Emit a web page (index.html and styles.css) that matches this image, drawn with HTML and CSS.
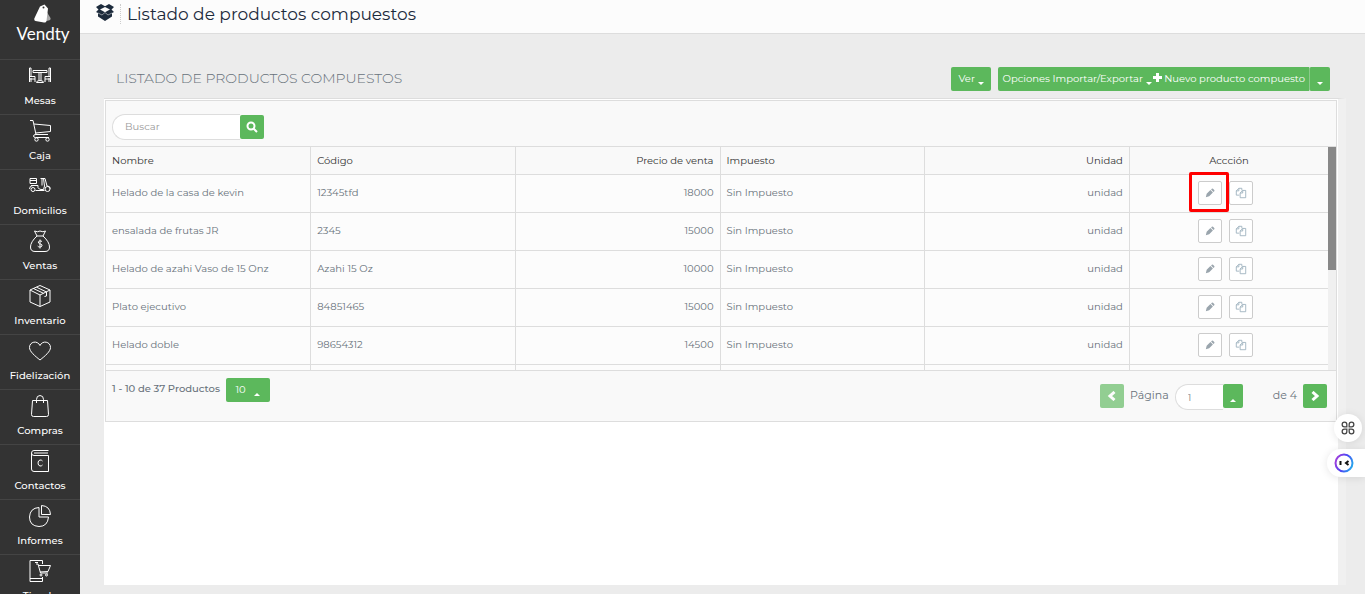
FILE: index.html
```html
<!DOCTYPE html>
<html lang="es">
<head>
  <meta charset="UTF-8">
  <meta name="viewport" content="width=device-width, initial-scale=1.0">
  <title>Vendty - Listado de productos compuestos</title>
  <link rel="stylesheet" href="styles.css">
</head>
<body>
  <svg class="sprite" aria-hidden="true">
    <symbol id="pencil" viewBox="0 0 12 12"><path d="M1 11l1-4L6.500 2.500l3 3L5 10zM7.300 1.800l.9-.9q.7-.6 1.400 0l1.500 1.500q.6.700 0 1.400l-.9.900z"/></symbol>
    <symbol id="copy" viewBox="0 0 14 14"><path d="M5 9.500H1.500V4.500l3-3H8V4M4.500 1.500v3h-3M6 12.500V7l3-3h3.500v8.500zM9 4v3H6" fill="none" stroke="currentColor"/></symbol>
  </svg>

  <div class="layout">
    <nav class="sidebar">
      <a href="#" class="logo">
        <svg width="20" height="20" viewBox="0 0 20 20">
          <path d="M12 5l5.500 9q.5 2-2 2.500l-4 1z" fill="#aaa"/>
          <path d="M7 2.500l4.500-2 3.500 4-1.500 12.500q-.5 2-2.500 1.500L2.500 17q-1.700-.5-1.200-2.500z" fill="#fff"/>
          <circle cx="10.500" cy="3.500" r="1" fill="#333"/>
        </svg>
        <span>Vendty</span>
      </a>
      <a href="#" class="menu-item">
        <svg width="24" height="24" viewBox="0 0 24 24"><path d="M1.500 4v14M3 4v8M1.500 12.500H7V18M3 14v4M1.500 15H7M22.500 4v14M21 4v8M22.500 12.500H17V18M21 14v4M22.500 15H17M1.500 4H3M21 4h1.500M5 6.500h14v2H5zM11 8.500v8M13 8.500v8M8.500 18.500q0-2 3.500-2t3.500 2z"/></svg>
        <span>Mesas</span>
      </a>
      <a href="#" class="menu-item">
        <svg width="24" height="24" viewBox="0 0 24 24"><path d="M2 1.500h3L8 15.500h12M6 5l16.500 1.500v6L7.500 14M8 15.500q-2.500 0-2.500 1.500t2 1.500h13.500"/><circle cx="8.500" cy="20.500" r="1.700"/><circle cx="19.500" cy="20.500" r="1.700"/></svg>
        <span>Caja</span>
      </a>
      <a href="#" class="menu-item">
        <svg width="24" height="24" viewBox="0 0 24 24"><path d="M2 4.500h6.500v5H2zM2 6.500h6.500M3 11.500h7v2q1 2 3 2h2.500l1-3.500-1-7.500M1.500 15q0-3.500 3.500-3.500M12.500 4.500h4.500l2 7.500q3 0 3.500 2.500M7.500 16.500h9M14 5v6.500"/><circle cx="5" cy="15.500" r="2"/><circle cx="19.500" cy="15" r="2.500"/></svg>
        <span>Domicilios</span>
      </a>
      <a href="#" class="menu-item">
        <svg width="24" height="24" viewBox="0 0 24 24"><path d="M9 7L6.500 2q3 1.500 5.500 0 3 1.500 5.500 0L15 7zM9 7q-6.500 6-6.500 11 0 4.500 4.500 4.500h10q4.500 0 4.500-4.500 0-5-6.500-11M14 12.500q-1-.8-2.500-.5-1.700.5-1 2 .5.800 2 1 2 .5 1.500 2-.5 1.200-2.300 1-1.200 0-2-.9M12 10.500v9"/></svg>
        <span>Ventas</span>
      </a>
      <a href="#" class="menu-item">
        <svg width="24" height="24" viewBox="0 0 24 24"><path d="M12 1.500l10 4.500v12l-10 4.500L2 18V6zM2 6l10 5 10-5M12 11v11.500M5.500 4.500l10 4.800M8.500 3.200L18.500 8v4l-2 .5"/></svg>
        <span>Inventario</span>
      </a>
      <a href="#" class="menu-item">
        <svg width="24" height="24" viewBox="0 0 24 24"><path d="M12 21C7 17 1.500 12.500 1.500 8.500 1.500 2.500 9.500 1 12 6.500 14.500 1 22.500 2.500 22.500 8.500 22.500 12.500 17 17 12 21z"/></svg>
        <span>Fidelización</span>
      </a>
      <a href="#" class="menu-item">
        <svg width="24" height="24" viewBox="0 0 24 24"><path d="M4.500 6.500h15l1 14q0 2-2 2h-13q-2 0-2-2zM8.500 9V5.500q0-4 3.500-4t3.500 4V9"/></svg>
        <span>Compras</span>
      </a>
      <a href="#" class="menu-item">
        <svg width="24" height="24" viewBox="0 0 24 24"><path d="M20.500 1.500H6Q3.500 1.500 3.500 4T6 6.500h14.500v16H6q-2.500 0-2.500-2.500V4M6 4h14M14.500 12q-1-1.200-2.500-1-2 .5-2 3t2 3q1.500.2 2.500-1"/></svg>
        <span>Contactos</span>
      </a>
      <a href="#" class="menu-item">
        <svg width="24" height="24" viewBox="0 0 24 24"><path d="M11 3.500V13h9.500q-.8 9.500-9.500 9.500-9.500-.5-9.500-9.500Q2 4 11 3.500zM13.500 1.500q8.500.5 9 9h-9z"/></svg>
        <span>Informes</span>
      </a>
      <a href="#" class="menu-item">
        <svg width="24" height="24" viewBox="0 0 24 24"><path d="M14.500 5V1.500H2v21h12.500V18M2 19.500h12.500M7 3.500h3M8 5h2l2.500 9h7.500M10.500 6.500h12l-2.500 6-8 .5"/><circle cx="13" cy="16" r="1"/><circle cx="18.500" cy="16" r="1"/></svg>
        <span>Tienda</span>
      </a>
    </nav>

    <main class="main">
      <header class="topbar">
        <svg width="18" height="17" viewBox="0 0 18 17"><path d="M5 0l4 2.200L13 0l5 3-2.500 2.500L18 8l-2 1v3.500L9 17l-7-4.500V9L0 8l2.500-2.500L0 3z" fill="#1d2b3c"/><path d="M4 5.500L9 3l5 2.500L9 8.300z" fill="#fcfcfc"/><path d="M2 9l4 2 3-2.500 3 2.500 4-2" fill="none" stroke="#8a929b"/></svg>
        <h1>Listado de productos compuestos</h1>
      </header>

      <section class="content">
        <div class="heading">
          <h2>LISTADO DE PRODUCTOS COMPUESTOS</h2>
          <div class="actions">
            <button class="btn btn-view">Ver <i class="caret"></i></button>
            <div class="btn-group">
              <button class="btn btn-options">Opciones Importar/Exportar <i class="caret"></i></button>
              <button class="btn btn-new"><svg width="9" height="9" viewBox="0 0 9 9"><path d="M3 0h3v3h3v3H6v3H3V6H0V3h3z" fill="#fff"/></svg> Nuevo producto compuesto</button>
              <button class="btn btn-more" aria-label="Más opciones"><i class="caret"></i></button>
            </div>
          </div>
        </div>

        <div class="panel">
          <div class="repeater">
            <form class="search">
              <input type="text" placeholder="Buscar" aria-label="Buscar">
              <button type="button" class="btn" aria-label="Buscar"><svg width="12" height="12" viewBox="0 0 12 12" fill="none" stroke="#fff" stroke-width="2"><circle cx="5" cy="5" r="3.500"/><path d="M7.500 7.500L11 11"/></svg></button>
            </form>

            <div class="viewport">
              <table>
                <thead>
                  <tr>
                    <th>Nombre</th>
                    <th>Código</th>
                    <th class="right">Precio de venta</th>
                    <th>Impuesto</th>
                    <th class="right">Unidad</th>
                    <th class="center">Accción</th>
                  </tr>
                </thead>
                <tbody>
                  <tr>
                    <td>Helado de la casa de kevin</td>
                    <td>12345tfd</td>
                    <td class="right">18000</td>
                    <td>Sin Impuesto</td>
                    <td class="right">unidad</td>
                    <td class="center"><div class="tools"><button class="tool marked" aria-label="Editar"><svg width="10" height="10"><use href="#pencil"/></svg></button><button class="tool" aria-label="Duplicar"><svg width="12" height="12"><use href="#copy"/></svg></button></div></td>
                  </tr>
                  <tr>
                    <td>ensalada de frutas JR</td>
                    <td>2345</td>
                    <td class="right">15000</td>
                    <td>Sin Impuesto</td>
                    <td class="right">unidad</td>
                    <td class="center"><div class="tools"><button class="tool" aria-label="Editar"><svg width="10" height="10"><use href="#pencil"/></svg></button><button class="tool" aria-label="Duplicar"><svg width="12" height="12"><use href="#copy"/></svg></button></div></td>
                  </tr>
                  <tr>
                    <td>Helado de azahi Vaso de 15 Onz</td>
                    <td>Azahi 15 Oz</td>
                    <td class="right">10000</td>
                    <td>Sin Impuesto</td>
                    <td class="right">unidad</td>
                    <td class="center"><div class="tools"><button class="tool" aria-label="Editar"><svg width="10" height="10"><use href="#pencil"/></svg></button><button class="tool" aria-label="Duplicar"><svg width="12" height="12"><use href="#copy"/></svg></button></div></td>
                  </tr>
                  <tr>
                    <td>Plato ejecutivo</td>
                    <td>84851465</td>
                    <td class="right">15000</td>
                    <td>Sin Impuesto</td>
                    <td class="right">unidad</td>
                    <td class="center"><div class="tools"><button class="tool" aria-label="Editar"><svg width="10" height="10"><use href="#pencil"/></svg></button><button class="tool" aria-label="Duplicar"><svg width="12" height="12"><use href="#copy"/></svg></button></div></td>
                  </tr>
                  <tr>
                    <td>Helado doble</td>
                    <td>98654312</td>
                    <td class="right">14500</td>
                    <td>Sin Impuesto</td>
                    <td class="right">unidad</td>
                    <td class="center"><div class="tools"><button class="tool" aria-label="Editar"><svg width="10" height="10"><use href="#pencil"/></svg></button><button class="tool" aria-label="Duplicar"><svg width="12" height="12"><use href="#copy"/></svg></button></div></td>
                  </tr>
                  <tr class="empty"><td></td><td></td><td></td><td></td><td></td><td></td></tr>
                </tbody>
              </table>
              <div class="scrollbar"><div class="thumb"></div></div>
            </div>

            <div class="footer">
              <div class="count">
                <span>1 - 10 de 37 Productos</span>
                <button class="btn btn-size">10 <i class="caret up"></i></button>
              </div>
              <div class="pager">
                <button class="btn btn-page" disabled aria-label="Anterior"><svg width="10" height="10" viewBox="0 0 10 10"><path d="M7.500 1L3 5l4.500 4"/></svg></button>
                <label for="page">Página</label>
                <div class="combo">
                  <input type="text" id="page" value="1">
                  <button class="btn" aria-label="Elegir página"><i class="caret up"></i></button>
                </div>
                <span class="total">de 4</span>
                <button class="btn btn-page" aria-label="Siguiente"><svg width="10" height="10" viewBox="0 0 10 10"><path d="M2.500 1L7 5 2.500 9"/></svg></button>
              </div>
            </div>
          </div>
        </div>
      </section>
    </main>
  </div>

  <button class="float-apps" aria-label="Aplicaciones"><svg width="14" height="14" viewBox="0 0 12 12" fill="none" stroke="#444" stroke-width="1.100"><path d="M5 5H3a2 2 0 1 1 2-2zM7 5V3a2 2 0 1 1 2 2zM5 7v2a2 2 0 1 1-2-2zM7 7h2a2 2 0 1 1-2 2z"/></svg></button>
  <button class="float-chat" aria-label="Asistente">
    <svg width="20" height="20" viewBox="0 0 20 20">
      <defs><linearGradient id="ring" x1="0" y1="0.300" x2="1" y2="0.700"><stop offset="0" stop-color="#a13fdc"/><stop offset="0.500" stop-color="#4a45f5"/><stop offset="1" stop-color="#27a8ec"/></linearGradient></defs>
      <circle cx="10" cy="10" r="8.500" fill="#fff" stroke="url(#ring)" stroke-width="2"/>
      <path d="M6.500 8v4M14.500 8L12 10l2.500 2" fill="none" stroke="#111" stroke-width="2"/>
    </svg>
  </button>
</body>
</html>
```
FILE: styles.css
```css
* {
  box-sizing: border-box;
}

body {
  margin: 0;
  font-family: Montserrat, Inter, sans-serif;
  font-size: 10px;
  color: #68727b;
  background: #ececec;
}

button,
input {
  font-family: inherit;
  font-size: inherit;
}

.sprite {
  display: none;
}

.layout {
  display: flex;
  height: 100vh;
  overflow: hidden;
}

/* sidebar */
.sidebar {
  flex: 0 0 80px;
  background: #333;
}

.sidebar a {
  display: flex;
  flex-direction: column;
  align-items: center;
  color: #fff;
  text-decoration: none;
}

.logo {
  height: 59px;
  padding-top: 4px;
  font-family: Lato, sans-serif;
  font-size: 17px;
  line-height: 20px;
}

.logo span {
  padding-left: 6px;
}

.logo svg {
  margin-left: 6px;
}

.menu-item {
  height: 55px;
  padding-top: 4px;
  border-top: 1px solid #444;
  font-size: 10px;
  font-weight: 500;
  line-height: 26px;
}

.menu-item svg {
  fill: none;
  stroke: #fff;
  stroke-width: 1;
}

/* page */
.main {
  flex: 1;
  display: flex;
  flex-direction: column;
  min-width: 0;
}

.topbar {
  display: flex;
  height: 34px;
  padding: 4px 16px;
  background: #fcfcfc;
  border-bottom: 1px solid #ddd;
}

.topbar h1 {
  margin: 0 0 0 6px;
  padding-left: 6px;
  height: 20px;
  border-left: 1px dotted #ccc;
  color: #1d2b3c;
  font-size: 17px;
  font-weight: 400;
  line-height: 20px;
}

.content {
  flex: 1;
  display: flex;
  flex-direction: column;
  padding: 33px 19px 9px 24px;
}

.heading {
  display: flex;
  justify-content: space-between;
  height: 31px;
  padding: 0 16px 0 12px;
}

.heading h2 {
  margin: 0;
  font-size: 14px;
  font-weight: 300;
  line-height: 22px;
}

.actions {
  display: flex;
  gap: 7px;
}

.btn {
  height: 24px;
  padding: 0 7px;
  border: 0;
  border-radius: 2px;
  background: #5cb85c;
  color: #fff;
  font-weight: 400;
  line-height: 22px;
  white-space: nowrap;
  cursor: pointer;
}

.btn:hover {
  background: #4cae4c;
}

.btn-group {
  display: flex;
}

.btn-options {
  padding: 0 0 0 5px;
  border-radius: 2px 0 0 2px;
}

.btn-new {
  padding: 0 4px 0 1px;
  border-radius: 0;
}

.btn-more {
  border-left: 1px solid #8bcb8b;
}

.caret {
  display: inline-block;
  border: 3px solid transparent;
  border-top-color: #fff;
  border-bottom: 0;
  vertical-align: -3px;
}

.caret.up {
  border-top: 0;
  border-bottom: 3px solid #fff;
}

.panel {
  flex: 1;
  background: #fff;
  border-top: 1px solid #ddd;
  border-right: 8px solid #f0f0f0;
  padding: 1px 1px 0;
}

.repeater {
  background: #f9f9f9;
  border: 1px solid #ddd;
}

.search {
  display: flex;
  padding: 13px 6px 6px;
}

.search input,
.combo input {
  height: 26px;
  border: 1px solid #ddd;
  border-right: 0;
  border-radius: 13px 0 0 13px;
  background: #fff;
  color: #888;
  outline: none;
}

.search input {
  width: 128px;
  padding: 0 12px 2px;
}

.search input::placeholder {
  color: #999;
}

.search .btn {
  width: 24px;
  margin-top: 1px;
  padding: 2px 0 0;
  line-height: 12px;
}

/* table */
.viewport {
  display: flex;
  height: 224px;
  overflow: hidden;
  border-top: 1px solid #ddd;
}

table {
  flex: 1;
  border-collapse: collapse;
  table-layout: fixed;
  background: #fcfcfc;
}

th,
td {
  width: 16.75%;
  height: 38px;
  padding: 0 6px 2px;
  border-right: 1px solid #ddd;
  border-bottom: 1px solid #ddd;
  text-align: left;
  font-weight: 400;
}

th {
  height: 27px;
  padding-bottom: 0;
  background: #f9f9f9;
  color: #333;
}

th:last-child,
td:last-child {
  width: 16.25%;
  padding-bottom: 0;
  border-right: 0;
}

.right {
  text-align: right;
}

.center {
  text-align: center;
}

.empty td {
  height: 10px;
}

.tools {
  display: flex;
  justify-content: center;
  gap: 7px;
  padding-right: 6px;
}

.tool {
  position: relative;
  display: flex;
  align-items: center;
  justify-content: center;
  width: 24px;
  height: 24px;
  padding: 0;
  border: 1px solid #ccc;
  border-radius: 2px;
  background: #fff;
  color: #9ab0bc;
  fill: #9aa5ad;
}

.marked::after {
  content: "";
  position: absolute;
  top: -10px;
  left: -10px;
  width: 40px;
  height: 40px;
  box-sizing: border-box;
  border: 3px solid #f00;
  border-radius: 2px;
}

.scrollbar {
  width: 8px;
  background: #f0f0f0;
}

.thumb {
  height: 55%;
  background: #888;
}

/* footer */
.footer {
  display: flex;
  justify-content: space-between;
  height: 51px;
  padding: 7px 9px 0 6px;
  border-top: 1px solid #ddd;
}

.count,
.pager {
  display: flex;
}

.count {
  gap: 6px;
  line-height: 22px;
}

.count span {
  font-weight: 500;
}

.btn-size {
  width: 44px;
}

.btn-size .caret {
  margin-left: 6px;
}

.pager {
  padding-top: 6px;
  line-height: 22px;
}

.pager label {
  margin: 0 6px;
  font-size: 11px;
}

.btn-page {
  width: 24px;
  padding: 0;
}

.btn-page svg {
  fill: none;
  stroke: #fff;
  stroke-width: 3;
  vertical-align: middle;
}

.btn-page:disabled {
  opacity: 0.65;
}

.combo {
  display: flex;
}

.combo input {
  width: 48px;
  padding: 0 12px;
}

.combo .btn {
  width: 20px;
  padding: 0;
}

.total {
  margin: 0 6px 0 30px;
  font-size: 11px;
}

/* floating buttons */
.float-apps,
.float-chat {
  position: fixed;
  right: 0;
  display: flex;
  align-items: center;
  height: 28px;
  border: 0;
  background: #fff;
  box-shadow: 0 1px 8px rgba(0, 0, 0, 0.1);
}

.float-apps {
  top: 414px;
  right: 3px;
  width: 28px;
  padding: 0 7px;
  border-radius: 50%;
}

.float-chat {
  top: 449px;
  width: 38px;
  padding: 0 7px;
  border-radius: 14px 0 0 14px;
}
```
